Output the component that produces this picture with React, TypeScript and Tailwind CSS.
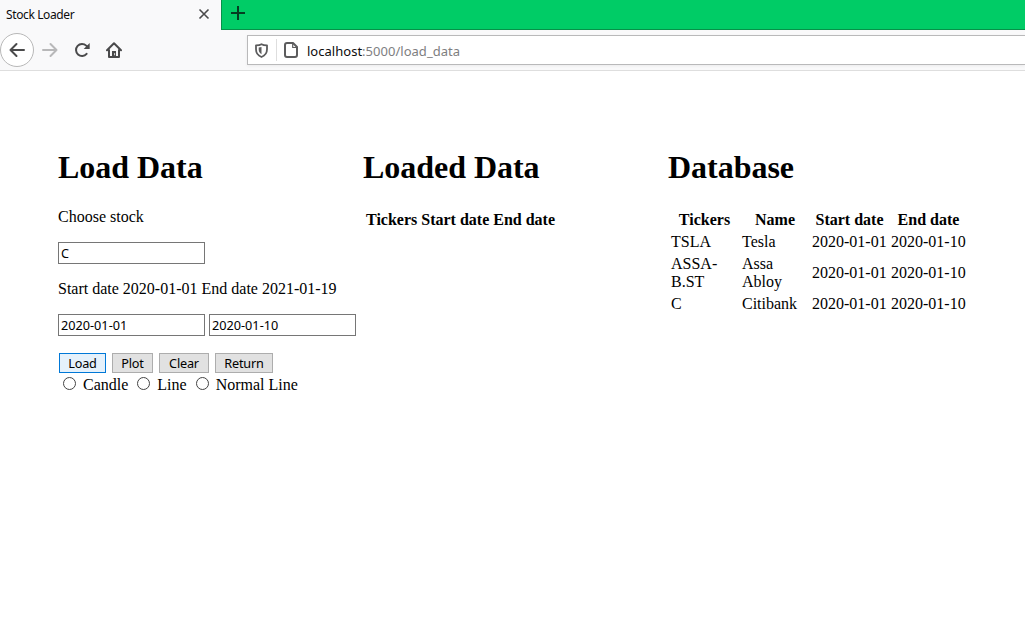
import type { ReactNode } from "react";

const serif = "font-['Liberation_Serif',serif]";
const sans = "font-['Noto_Sans',sans-serif]";

function Tabs() {
  return (
    <div className="flex h-[30px] bg-[#00cc66]">
      <div className="flex w-[221px] items-center justify-between bg-[#f9f9fa] pl-[6px] pr-[11px]">
        <span className="text-[12px] leading-[16px] tracking-[-0.38px] text-[#0c0c0d]">Stock Loader</span>
        <svg width="12" height="12" viewBox="0 0 12 12" className="-mt-[2px]" fill="none" stroke="#4a4a4b" strokeWidth="1.6">
          <path d="M1.5 1.5l9 9M10.5 1.5l-9 9" />
        </svg>
      </div>
      <div className="flex-1 border-b border-l border-[#079149] pl-[9px] pt-[6px]">
        <svg width="14" height="14" viewBox="0 0 14 14" fill="none" stroke="#053d21" strokeWidth="2">
          <path d="M0 7h14M7 0v14" />
        </svg>
      </div>
    </div>
  );
}

function Toolbar() {
  return (
    <div className="flex h-[41px] items-center border-b border-[#dedede] bg-[#f9f9fa]">
      <div className="flex h-[34px] w-[34px] shrink-0 items-center justify-center rounded-full border border-[#b8b8b8] bg-white">
        <svg width="16" height="16" viewBox="0 0 16 16" fill="none" stroke="#4a4a4b" strokeWidth="2" strokeLinecap="round" strokeLinejoin="round">
          <path d="M15 8H1.5M7.5 2l-6 6 6 6" />
        </svg>
      </div>
      <svg className="ml-[8px] shrink-0" width="16" height="16" viewBox="0 0 16 16" fill="none" stroke="#b8b8b9" strokeWidth="2" strokeLinecap="round" strokeLinejoin="round">
        <path d="M1 8h13.5M8.5 2l6 6-6 6" />
      </svg>
      <svg className="ml-[16px] shrink-0" width="16" height="16" viewBox="0 0 16 16" fill="none" stroke="#4a4a4b" strokeWidth="2" strokeLinecap="round">
        <path d="M12.6 11.8A6 6 0 1 1 12.2 3.6L14 5.3" />
        <path d="M15.7 1v6H9.7z" fill="#4a4a4b" stroke="none" />
      </svg>
      <svg className="ml-[16px] shrink-0" width="16" height="16" viewBox="0 0 16 16" fill="none" stroke="#4a4a4b" strokeWidth="2" strokeLinecap="round" strokeLinejoin="round">
        <path d="M1 8.2L8 1.3l7 6.9M3 8v7h10V8" />
        <path d="M6 15V9h4v6z" fill="#4a4a4b" stroke="none" />
        <path d="M8.6 11.5v1.4" stroke="#ddd" strokeWidth="1" />
      </svg>
      <div className="ml-[125px] flex h-[30px] flex-1 items-center border border-r-0 border-[#b9b9ba] bg-white pl-[7px] shadow-[0_1px_3px_rgba(0,0,0,0.06)]">
        <svg width="13" height="15" viewBox="0 0 13 15" fill="none" stroke="#5c5c5d" strokeWidth="1.8" strokeLinejoin="round">
          <path d="M6.5 1.2C8 2.1 10 2.3 12 2.3v4C12 10.2 9.5 12.8 6.5 14 3.5 12.8 1 10.2 1 6.3v-4c2 0 4-.2 5.5-1.1z" />
          <path d="M6.5 4v7.2C4.700 10.200 3.700 8.600 3.700 6.500v-2.100C4.800 4.400 5.700 4.300 6.500 4z" fill="#5c5c5d" stroke="none" />
        </svg>
        <div className="ml-[8px] h-[22px] w-px bg-[#dedede]" />
        <svg className="ml-[7px]" width="14" height="16" viewBox="0 0 14 16" fill="none" stroke="#5c5c5d" strokeWidth="2" strokeLinejoin="round">
          <path d="M3 1h6l4 4v8a2 2 0 0 1-2 2H3a2 2 0 0 1-2-2V3a2 2 0 0 1 2-2z" />
          <path d="M8.7 1v4.5H13" strokeWidth="1.2" />
        </svg>
        <div className="ml-[9px] mt-[2px] text-[13px] leading-[18px] tracking-[0.02px] text-[#7e7e7f]">
          <span className="text-[#0c0c0d]">localhost</span>:5000/load_data
        </div>
      </div>
    </div>
  );
}

function Field({ value }: { value: string }) {
  return (
    <input
      type="text"
      defaultValue={value}
      className={`${sans} block h-[22px] w-[147px] border border-[#767676] bg-white px-[2px] text-[12.7px] leading-[18px] text-black outline-none`}
    />
  );
}

function Heading({ children }: { children: ReactNode }) {
  return <h1 className="mb-[22px] text-[32px] font-bold leading-[37px] tracking-[-0.03px]">{children}</h1>;
}

const buttons = [
  { label: "Load", style: "w-[47px] border-[#0078d7] bg-[#e5f1fb]" },
  { label: "Plot", style: "w-[41px] border-[#adadad] bg-[#e1e1e1]" },
  { label: "Clear", style: "w-[50px] border-[#adadad] bg-[#e1e1e1]" },
  { label: "Return", style: "w-[58px] border-[#adadad] bg-[#e1e1e1]" },
];

const rows = [
  ["TSLA", "Tesla"],
  ["ASSA-B.ST", "Assa Abloy"],
  ["C", "Citibank"],
];

function Radio({ label }: { label: string }) {
  return (
    <label className="flex">
      <input type="radio" name="plot" className="mr-[7px] mt-px h-[13px] w-[13px] appearance-none rounded-full border border-[#444] bg-white" />
      {label}
    </label>
  );
}

export default function App() {
  return (
    <div className={`${sans} h-[637px] w-[1025px] overflow-hidden bg-white`}>
      <Tabs />
      <Toolbar />
      <main className={`${serif} flex pl-[58px] pt-[78px] text-[16px] leading-[18px] text-black`}>
        <section className="w-[305px] shrink-0">
          <Heading>Load Data</Heading>
          <p className="mb-[16px]">Choose stock</p>
          <Field value="C" />
          <p className="my-[16px] whitespace-nowrap">Start date 2020-01-01 End date 2021-01-19</p>
          <div className="flex gap-[4px]">
            <Field value="2020-01-01" />
            <Field value="2020-01-10" />
          </div>
          <div className="ml-px mt-[17px] flex gap-[6px]">
            {buttons.map((b) => (
              <button key={b.label} className={`${sans} ${b.style} h-[20px] border text-center text-[12.7px] leading-[18px] tracking-[-0.2px]`}>
                {b.label}
              </button>
            ))}
          </div>
          <div className="ml-[5px] mt-[3px] flex gap-[9px] whitespace-nowrap">
            <Radio label="Candle" />
            <Radio label="Line" />
            <Radio label="Normal Line" />
          </div>
        </section>
        <section className="w-[305px] shrink-0">
          <Heading>Loaded Data</Heading>
          <div className="flex gap-[4px] whitespace-nowrap pl-[3px] pt-[3px] font-bold">
            <span>Tickers</span>
            <span>Start date</span>
            <span>End date</span>
          </div>
        </section>
        <section className="w-[305px] shrink-0">
          <Heading>Database</Heading>
          <table className="w-[301px] table-fixed border-separate border-spacing-[2px]">
            <colgroup>
              <col className="w-[69px]" />
              <col className="w-[68px]" />
              <col className="w-[77px]" />
              <col className="w-[77px]" />
            </colgroup>
            <thead>
              <tr>
                {["Tickers", "Name", "Start date", "End date"].map((h) => (
                  <th key={h} className="whitespace-nowrap p-px text-center font-bold">{h}</th>
                ))}
              </tr>
            </thead>
            <tbody>
              {rows.map(([ticker, name]) => (
                <tr key={ticker}>
                  <td className="p-px pr-[18px]">{ticker}</td>
                  <td className="p-px pr-0">{name}</td>
                  <td className="whitespace-nowrap p-px">2020-01-01</td>
                  <td className="whitespace-nowrap p-px">2020-01-10</td>
                </tr>
              ))}
            </tbody>
          </table>
        </section>
      </main>
    </div>
  );
}
